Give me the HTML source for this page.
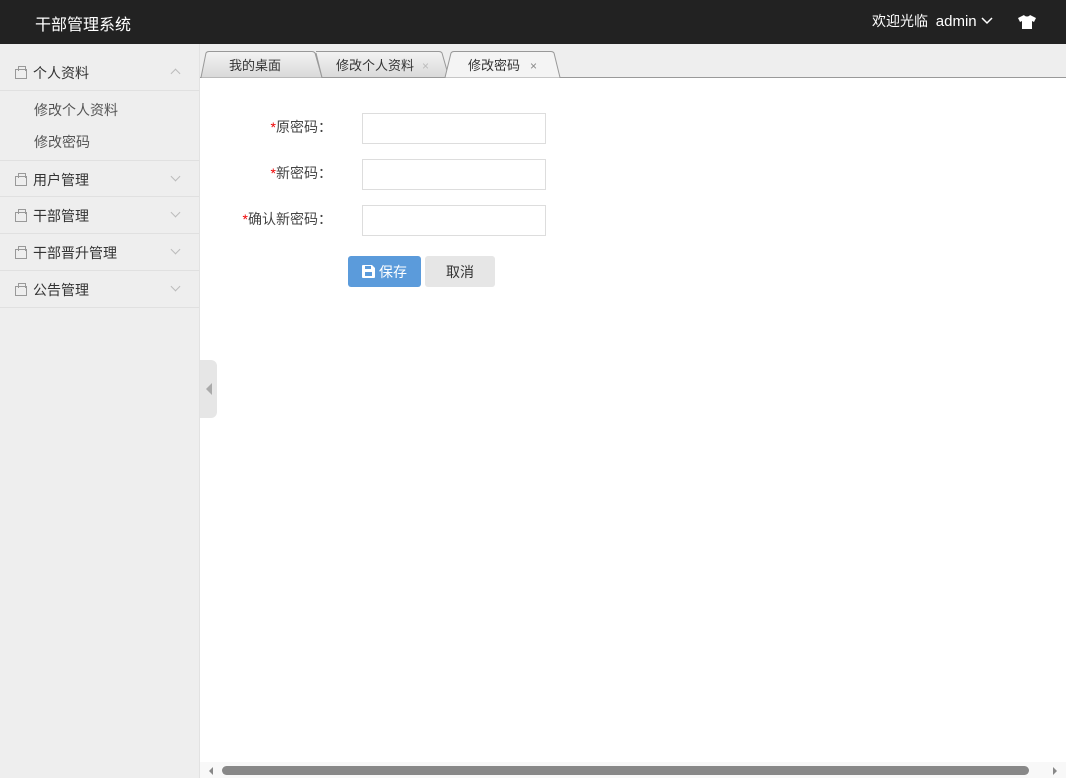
<!DOCTYPE html>
<html><head><meta charset="utf-8"><style>
*{margin:0;padding:0;box-sizing:border-box}
body{width:1066px;height:778px;overflow:hidden;font-family:"Liberation Sans","Noto Sans CJK SC",sans-serif;font-size:14px;color:#333;background:#fff;position:relative}
.hd{position:absolute;left:0;top:0;width:1066px;height:44px;background:#222;color:#fff}
.hd .logo{position:absolute;left:35px;top:11px;font-size:16px}
.hd .r{position:absolute;left:872px;top:11px;font-size:14px}
.hd .r .a{font-size:15px}
.sb{position:absolute;left:0;top:44px;width:200px;height:734px;background:#eee;border-right:1px solid #e2e2e2}
.it{position:absolute;left:0;width:199px;height:37px;border-bottom:1px solid #e0e0e0;font-size:14px;color:#333}
.it span{position:absolute;left:15px;top:9px}
.it i{position:absolute;left:172px;top:12px;width:7px;height:7px;border-left:1px solid #bbb;border-bottom:1px solid #bbb;transform:rotate(-45deg)}
.it i.up{transform:rotate(135deg);top:16px}
.sub{position:absolute;left:34px;font-size:14px;color:#555}
.bag{display:inline-block;width:12px;height:10px;border:1px solid #999;margin-right:6px;position:relative;vertical-align:-1px}
.bag:before{content:"";position:absolute;left:2px;top:-4px;width:6px;height:4px;border:1px solid #999;border-bottom:none}
.tabs{position:absolute;left:200px;top:44px;width:866px;height:34px;background:#eee;border-bottom:1px solid #999}
.lab{position:absolute;width:130px;text-align:right;font-size:14px;color:#444}
.lab b{color:#e00;font-weight:normal}
.inp{position:absolute;left:362px;width:184px;height:31px;border:1px solid #ddd;background:#fff}
</style></head><body>
<div class="hd"><div class="logo">干部管理系统</div>
<div class="r">欢迎光临&nbsp;&nbsp;<span class="a">admin</span> <svg width="12" height="8" style="vertical-align:1px"><path d="M1 1l5 5 5-5" stroke="#fff" fill="none" stroke-width="1.5"/></svg></div>
<svg style="position:absolute;left:1018px;top:15px" width="18" height="14" viewBox="0 0 18 14"><path d="M6 0L0 3l2 4 2-1v8h10V6l2 1 2-4-6-3c-1 2-5 2-6 0z" fill="#fff"/></svg>
</div>
<div class="sb">
<div class="it" style="top:10px;height:37px"><span><em class="bag"></em>个人资料</span><i class="up"></i></div>
<div class="sub" style="top:56px">修改个人资料</div>
<div class="sub" style="top:88px">修改密码</div>
<div class="it" style="top:116px;border-top:1px solid #e0e0e0"><span><em class="bag"></em>用户管理</span><i></i></div>
<div class="it" style="top:153px"><span><em class="bag"></em>干部管理</span><i></i></div>
<div class="it" style="top:190px"><span><em class="bag"></em>干部晋升管理</span><i></i></div>
<div class="it" style="top:227px"><span><em class="bag"></em>公告管理</span><i></i></div>
</div>
<div style="position:absolute;left:200px;top:360px;width:17px;height:58px;background:#e6e6e6;border-radius:0 6px 6px 0"></div>
<svg style="position:absolute;left:204px;top:382px" width="10" height="14"><path d="M8 1L2 7l6 6z" fill="#aaa"/></svg>
<div class="tabs"></div>
<svg style="position:absolute;left:200px;top:50px" width="370" height="28">
<defs><linearGradient id="g" x1="0" y1="0" x2="0" y2="1"><stop offset="0" stop-color="#f3f3f3"/><stop offset="1" stop-color="#d9d9d9"/></linearGradient></defs>
<path d="M1 27.5L6 3Q7 1.5 9 1.5H112Q114 1.5 115 3L122 27.5" fill="url(#g)" stroke="#999"/>
<path d="M116 1.5H239Q241 1.5 242 3L249 27.5H122L116 3" fill="url(#g)" stroke="#999"/>
<path d="M245 27.5L251 3Q252 1.5 254 1.5H351Q353 1.5 354 3L360 27.5" fill="#f4f4f4" stroke="#999"/>
<text x="29" y="20" font-size="13" fill="#333" font-family="Liberation Sans,Noto Sans CJK SC,sans-serif">我的桌面</text>
<text x="136" y="20" font-size="13" fill="#333" font-family="Liberation Sans,Noto Sans CJK SC,sans-serif">修改个人资料</text>
<text x="222" y="20" font-size="12" fill="#bbb">×</text>
<text x="268" y="20" font-size="13" fill="#333" font-family="Liberation Sans,Noto Sans CJK SC,sans-serif">修改密码</text>
<text x="330" y="20" font-size="12" fill="#888">×</text>
</svg>
<div class="lab" style="top:117px;left:202px"><b>*</b>原密码：</div>
<div class="lab" style="top:163px;left:202px"><b>*</b>新密码：</div>
<div class="lab" style="top:209px;left:202px"><b>*</b>确认新密码：</div>
<div class="inp" style="top:113px"></div>
<div class="inp" style="top:159px"></div>
<div class="inp" style="top:205px"></div>
<div style="position:absolute;left:348px;top:256px;width:73px;height:31px;background:#5b9bdb;border-radius:3px;color:#fff;font-size:14px;padding:6px 0 0 14px"><svg width="13" height="13" style="vertical-align:-1px;margin-right:4px"><path d="M0 1Q0 0 1 0H10L13 3V12Q13 13 12 13H1Q0 13 0 12z" fill="#fff"/><rect x="3" y="1" width="6" height="3" fill="#5b9bdb"/><rect x="3" y="7" width="7" height="4" fill="#5b9bdb"/></svg>保存</div>
<div style="position:absolute;left:425px;top:256px;width:70px;height:31px;background:#e6e6e6;border-radius:3px;font-size:14px;text-align:center;padding-top:6px;color:#333">取消</div>
<div style="position:absolute;left:200px;top:762px;width:866px;height:16px;background:#f8f8f8"></div>
<svg style="position:absolute;left:207px;top:766px" width="8" height="10"><path d="M6 1L2 5l4 4z" fill="#888"/></svg>
<div style="position:absolute;left:222px;top:766px;width:807px;height:9px;background:#888;border-radius:5px"></div>
<svg style="position:absolute;left:1051px;top:766px" width="8" height="10"><path d="M2 1l4 4-4 4z" fill="#888"/></svg>
</body></html>
